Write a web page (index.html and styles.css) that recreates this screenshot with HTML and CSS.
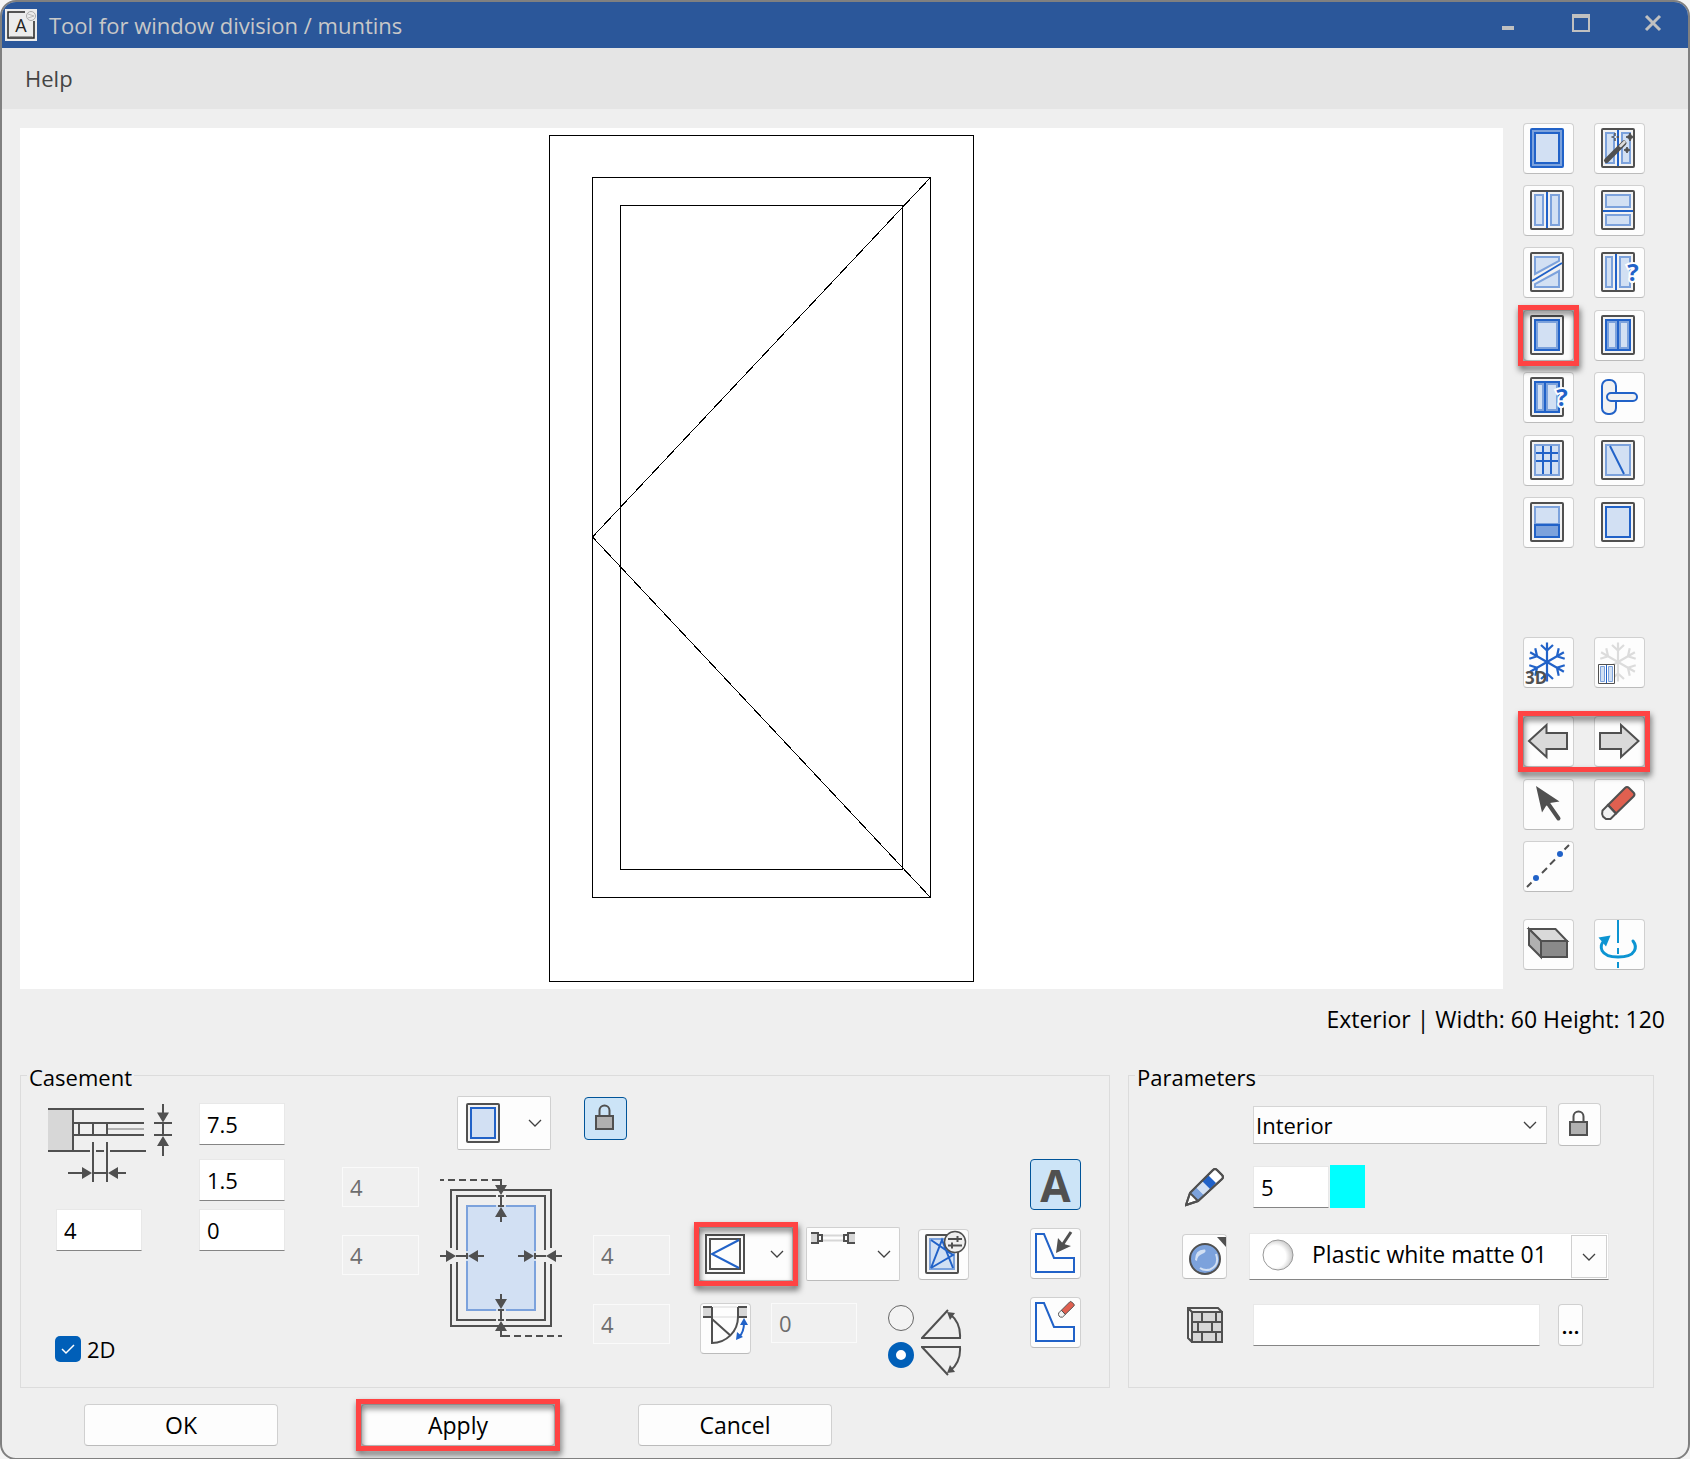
FILE: index.html
```html
<!DOCTYPE html>
<html lang="en">
<head>
<meta charset="utf-8">
<title>Tool for window division / muntins</title>
<link rel="stylesheet" href="styles.css">
</head>
<body>
<svg class="defs" aria-hidden="true">
  <symbol id="frame" viewBox="0 0 49 49"><rect class="dark pale" x="7" y="5" width="32" height="38" rx="1"/></symbol>
  <symbol id="chevron" viewBox="0 0 14 8"><path class="thin" d="M1 1l6 6 6-6"/></symbol>
  <symbol id="lock" viewBox="0 0 41 41"><path class="dark" d="M14.500 18v-5.500a5 5 0 0 1 10 0V18"/><rect class="dark mid" x="11" y="18" width="17" height="13"/></symbol>
  <symbol id="snow" viewBox="-24 -24 48 48">
    <g fill="none" stroke="currentColor" stroke-width="2.200">
      <path d="M0 0V-19.500M-6-17L0-11.500L6-17"/>
      <path transform="rotate(60)" d="M0 0V-19.500M-6-17L0-11.500L6-17"/>
      <path transform="rotate(120)" d="M0 0V-19.500M-6-17L0-11.500L6-17"/>
      <path transform="rotate(180)" d="M0 0V-19.500M-6-17L0-11.500L6-17"/>
      <path transform="rotate(240)" d="M0 0V-19.500M-6-17L0-11.500L6-17"/>
      <path transform="rotate(300)" d="M0 0V-19.500M-6-17L0-11.500L6-17"/>
    </g>
  </symbol>
  <symbol id="eraser" viewBox="0 0 49 49">
    <path class="red" d="M13 25L30 8q2-2 4 0l4.500 4.500q2 2 0 4L21 33.500Z"/>
    <path class="dark pale" d="M13 25L7.500 30.500Q6.500 34 8 36.500L11 39H15.500L21 33.500Z"/>
    <path class="dark" d="M13 25L30 8q2-2 4 0l4.500 4.500q2 2 0 4L21 33.500Z"/>
  </symbol>
  <symbol id="outline" viewBox="0 0 49 49"><path class="blue" d="M5 5H13L23 29H43V43H5Z"/></symbol>
</svg>

<div class="window">
  <header class="titlebar">
    <svg class="appicon" width="32" height="32" viewBox="0 0 32 32">
      <rect width="32" height="32" fill="#ececec"/>
      <path d="M20 3H3v26h26V12" fill="none" stroke="#222" stroke-width="1.500"/>
      <path d="M4.500 27.500h23" stroke="#999"/>
      <circle cx="26" cy="7" r="4.500" fill="none" stroke="#aaa"/><path d="M23 5l6 2M23 9l6-2" stroke="#bbb"/>
      <text x="16" y="23" text-anchor="middle" font-size="18" fill="#222">A</text>
    </svg>
    <h1 class="title">Tool for window division / muntins</h1>
    <div class="winbuttons">
      <button type="button" aria-label="Minimize"><svg width="20" height="20"><path d="M4 12h12v4H4z" fill="#c0c0c0"/></svg></button>
      <button type="button" aria-label="Maximize"><svg width="20" height="20"><path fill="#c0c0c0" fill-rule="evenodd" d="M1 0h18v18H1zM3 4v12h14V4z"/></svg></button>
      <button type="button" aria-label="Close"><svg width="20" height="20"><path d="M2 2l14 14M16 2L2 16" stroke="#c0c0c0" stroke-width="3"/></svg></button>
    </div>
  </header>
  <nav class="menubar"><button type="button">Help</button></nav>

  <main>
    <section class="work">
      <div class="canvas">
        <svg width="425" height="847" viewBox="0 0 425 847" fill="none" stroke="#000" role="img" aria-label="Window preview">
          <rect x=".5" y=".5" width="424" height="846"/>
          <rect x="43.500" y="42.500" width="338" height="720"/>
          <rect x="71.500" y="70.500" width="282" height="664"/>
          <path shape-rendering="crispEdges" d="M381.500 42.500L43.500 402L381.500 762.500"/>
        </svg>
      </div>

      <div class="toolbox">
        <div class="tools">
          <button type="button" class="tool" aria-label="Frame"><svg viewBox="0 0 49 49"><rect class="blue soft" x="7" y="5" width="32" height="38" rx="1"/><rect class="blue glass" x="11" y="9" width="24" height="30"/></svg></button>
          <button type="button" class="tool" aria-label="Wizard"><svg viewBox="0 0 49 49"><use href="#frame"/><path class="pane" d="M11 9h8v30h-8zM27 9h8v30h-8z"/><path class="blue" d="M23 6v36"/><path d="M11.500 36.500L29 19" stroke="#505050" stroke-width="5" stroke-linecap="round"/><path d="M25.500 22L29.500 18" stroke="#ddd" stroke-width="2.500" stroke-linecap="round"/><path d="M35 9l1.300 2.700L39 13l-2.700 1.300L35 17l-1.300-2.700L31 13l2.700-1.300zM32 23l1 2 2 1-2 1-1 2-1-2-2-1 2-1z" fill="#505050" stroke="#505050"/><path d="M20 9v3M20 14v3M16.500 13h2.500M21.500 13h2.500" stroke="#505050" stroke-width="1.500"/></svg></button>
          <button type="button" class="tool" aria-label="Vertical division"><svg viewBox="0 0 49 49"><use href="#frame"/><path class="pane" d="M11 9h8v30h-8zM27 9h8v30h-8z"/><path class="blue" d="M23 6v36"/></svg></button>
          <button type="button" class="tool" aria-label="Horizontal division"><svg viewBox="0 0 49 49"><use href="#frame"/><path class="pane" d="M11 9h24v12H11zM11 29h24v10H11z"/><path class="blue" d="M8 25h30"/></svg></button>
          <button type="button" class="tool" aria-label="Diagonal division"><svg viewBox="0 0 49 49"><use href="#frame"/><path class="pane" d="M11 9H35V13L11 26ZM35 23V39H11V36Z"/><path class="blue" d="M8 33L38 15"/></svg></button>
          <button type="button" class="tool" aria-label="Custom division"><svg viewBox="0 0 49 49"><use href="#frame"/><path class="pane" d="M11 9h6v30h-6zM25 9h10v30H25z"/><path class="blue" d="M21 6v36"/><text class="ask" x="38" y="33">?</text></svg></button>
        </div>
        <div class="tools">
          <div class="marked"><button type="button" class="tool" aria-label="Casement"><svg viewBox="0 0 49 49"><use href="#frame"/><rect class="blue soft" x="11" y="9" width="24" height="30"/><path class="fillglass" d="M14 12h18v24H14z"/></svg></button></div>
          <button type="button" class="tool" aria-label="Double casement"><svg viewBox="0 0 49 49"><use href="#frame"/><path class="blue soft" d="M11 9h24v30H11zM23 9v30"/><path class="fillglass" d="M14 12h6v24h-6zM26 12h6v24h-6z"/></svg></button>
          <button type="button" class="tool" aria-label="Custom casement"><svg viewBox="0 0 49 49"><use href="#frame"/><path class="blue soft" d="M11 9h24v30H11zM21 9v30"/><path class="fillglass" d="M14 12h4v24h-4zM24 12h8v24h-8z"/><text class="ask" x="38" y="33">?</text></svg></button>
          <button type="button" class="tool" aria-label="Handle"><svg viewBox="0 0 49 49"><rect class="blue pale" x="7" y="7" width="14" height="34" rx="6"/><rect class="blue pale" x="12" y="20" width="30" height="8" rx="4"/></svg></button>
        </div>
        <div class="tools">
          <button type="button" class="tool" aria-label="Muntins"><svg viewBox="0 0 49 49"><use href="#frame"/><path class="pane" d="M11 9h24v30H11z"/><path class="blue" d="M19 10v28M27 10v28M12 17h22M12 25h22"/></svg></button>
          <button type="button" class="tool" aria-label="Free muntin"><svg viewBox="0 0 49 49"><use href="#frame"/><path class="pane" d="M11 9h24v30H11z"/><path class="blue" d="M15 10l14 28"/></svg></button>
          <button type="button" class="tool" aria-label="Panel"><svg viewBox="0 0 49 49"><use href="#frame"/><path class="pane" d="M11 9h24v17H11z"/><path class="blue soft" d="M11 27h24v12H11z"/></svg></button>
          <button type="button" class="tool" aria-label="Glazing"><svg viewBox="0 0 49 49"><use href="#frame"/><path class="blue glass" d="M11 9h24v30H11z"/></svg></button>
        </div>
        <div class="tools tools-freeze">
          <button type="button" class="tool freeze" aria-label="Freeze 3D"><svg viewBox="0 0 49 49"><use href="#snow" x="-1" y="0" width="48" height="48"/><text x="1" y="46" font-size="17" font-weight="700" fill="#505050">3D</text></svg></button>
          <button type="button" class="tool freeze-off" aria-label="Freeze division"><svg viewBox="0 0 49 49"><use href="#snow" x="-1" y="0" width="48" height="48"/><path d="M3.500 26.500h16v19h-16z" fill="#fff" stroke="#505050"/><path d="M5.500 28.500h4v15h-4zM13.500 28.500h4v15h-4z" fill="#d2e0f3" stroke="#7ca2dc"/><path d="M11.500 27v18" stroke="#2162c8"/></svg></button>
        </div>
        <div class="tools tools-history marked">
          <button type="button" class="tool" aria-label="Undo"><svg viewBox="0 0 49 49"><path class="dark grey" d="M5 24L22.500 8V16H43V32H22.500V40Z"/></svg></button>
          <button type="button" class="tool" aria-label="Redo"><svg viewBox="0 0 49 49"><path class="dark grey" d="M43.500 24L26 8V16H5V32H26V40Z"/></svg></button>
        </div>
        <div class="tools tools-edit">
          <button type="button" class="tool" aria-label="Select"><svg viewBox="0 0 49 49"><path d="M12 6L35.500 21.500L26 23L22 26L18 32.500Z" fill="#505050"/><path d="M23 22L34.500 38.500" stroke="#505050" stroke-width="4" stroke-linecap="round"/></svg></button>
          <button type="button" class="tool" aria-label="Delete"><svg viewBox="0 0 49 49"><use href="#eraser"/></svg></button>
          <button type="button" class="tool" aria-label="Reference line"><svg viewBox="0 0 49 49"><path class="dark" d="M3 45l4.500-4.500M18 31l5-5M26 22.500l5-5M40.500 7.500L45 3"/><circle cx="12" cy="36" r="3" fill="#2162c8"/><circle cx="36" cy="12" r="3" fill="#2162c8"/></svg></button>
        </div>
        <div class="tools tools-view">
          <button type="button" class="tool" aria-label="3D view"><svg viewBox="0 0 49 49"><path class="dark grey" d="M5 9H31.500L43 21H17Z"/><path class="dark mid" d="M5 9L17 21V37L5 25Z"/><path class="dark shade" d="M17 21H43V37H17Z"/></svg></button>
          <button type="button" class="tool" aria-label="Flip view"><svg viewBox="0 0 49 49"><g fill="none" stroke="#0c94d2"><path stroke-width="2" d="M23 0v23M23 28v6M23 42v6"/><path stroke-width="3" stroke-linecap="round" d="M8 22C5 25 3.500 37 23 37S42 26 38 21"/></g><path d="M3.500 17.500L15.500 15.500L11 26.500Z" fill="#0c94d2"/></svg></button>
        </div>
      </div>
    </section>

    <p class="status">Exterior | Width: 60 Height: 120</p>

    <form class="settings">
      <div class="panels">
        <fieldset class="panel">
          <legend>Casement</legend>
          <div class="casement">
            <div class="col section">
              <svg width="125" height="80" viewBox="0 0 125 80">
                <path d="M0 5h25v44H0z" fill="#d7d7d7"/><path d="M60 26h36" stroke="#b0b0b0" stroke-width="2"/>
                <path class="dark" d="M0 6h96M0 48h42M48 48h8M62 48h36M25 6v42M25 20h71M25 32h71M31 20v12M45 20v12M59 20v12M45 39v40M59 39v40M20 70h16M45 70h14M68 70h10M115 1v10M115 20v12M115 40v13M106 20h18M106 32h18"/>
                <path class="tip" d="M34 64l10 6-10 6zM70 64l-10 6 10 6zM109 9.500h12l-6 10zM109 43h12l-6-10z"/>
              </svg>
              <input class="field" aria-label="Glass offset" value="4">
              <label class="check"><input type="checkbox" checked>2D</label>
            </div>
            <div class="col depths">
              <input class="field" aria-label="Profile depth" value="7.5">
              <input class="field" aria-label="Glass thickness" value="1.5">
              <input class="field" aria-label="Depth offset" value="0">
            </div>
            <div class="col left-widths">
              <input class="field small" aria-label="Top width" value="4" disabled>
              <input class="field small" aria-label="Left width" value="4" disabled>
            </div>
            <div class="col profile">
              <button type="button" class="drop" aria-haspopup="listbox" aria-label="Profile type">
                <svg width="34" height="40" viewBox="6 4 34 40"><use href="#frame" width="49" height="49"/><path class="blue glass" d="M11 9h24v30H11z"/></svg>
                <svg width="14" height="8"><use href="#chevron"/></svg>
              </button>
              <svg width="122" height="160" viewBox="0 0 122 160">
                <path class="dark" d="M11 70V12H111V70M111 86V148H11V86M17 72V18H56M66 18H105V72M105 84V142H66M56 142H17V84"/>
                <path class="fillglass" d="M26 27h70v106H26z"/>
                <path class="soften" d="M27 73V28H56M66 28H95V73M95 83V132H66M56 132H27V83"/>
                <path class="dark" d="M0 2h4M8 2h7M19 2h7M30 2h7M41 2h7M52 2h9V8M61 18v10M58 18h6M58 28h6M61 38v6M0 78h8M16 78h11M27 75v6M36 78h8M122 78h-8M106 78H95M95 75v6M86 78h-8M61 152v6h9M74 158h7M85 158h7M96 158h7M107 158h7M118 158h4M61 142v-10M58 142h6M58 132h6M61 122v-6"/>
                <path class="tip" d="M55 7h12l-6 10zM55 39h12l-6-10zM6 72v12l10-6zM38 72v12l-10-6zM116 72v12l-10-6zM84 72v12l10-6zM55 153h12l-6-10zM55 121h12l-6 10z"/>
              </svg>
            </div>
            <div class="col right-widths">
              <button type="button" class="lock on" aria-label="Lock widths" aria-pressed="true"><svg width="41" height="41"><use href="#lock"/></svg></button>
              <input class="field small" aria-label="Right width" value="4" disabled>
              <input class="field small" aria-label="Bottom width" value="4" disabled>
            </div>
            <div class="col opening">
              <div class="line">
                <div class="marked"><button type="button" class="drop wide-icon" aria-haspopup="listbox" aria-label="Opening type">
                  <svg width="40" height="40" viewBox="0 0 40 40"><rect class="dark" x="1" y="1" width="38" height="38"/><rect class="dark" x="5" y="5" width="30" height="30"/><path class="blue" d="M34 6L7 20L34 34"/></svg>
                  <svg width="14" height="8"><use href="#chevron"/></svg>
                </button></div>
                <button type="button" class="drop hinge" aria-haspopup="listbox" aria-label="Hinge position">
                  <svg class="high" width="44" height="12" viewBox="0 0 44 12"><path d="M0 1h7v10H0zM37 1h7v10h-7z" fill="#d7d7d7"/><path d="M12 3.500h20M12 8.500h20" stroke="#d7d7d7" stroke-width="2"/><path class="dark" d="M0 1H7V11H0M7 3h4v6H7M44 1H37V11H44M37 3h-4v6h4"/></svg>
                  <svg width="14" height="8"><use href="#chevron"/></svg>
                </button>
                <button type="button" class="tool options" aria-label="Opening options"><svg viewBox="0 0 49 49"><use href="#frame"/><path class="pane" d="M11 9h24v30H11z"/><path class="blue" d="M12 38L23 10L34 38M12 10L34 25L12 38"/><circle cx="36" cy="12" r="10.500" fill="#efefef" stroke="#505050" stroke-width="1.500"/><path class="dark" d="M29 9h14M29 15.500h14M38.500 6v6M33 12.500v6"/></svg></button>
              </div>
              <div class="line swing">
                <button type="button" class="tool" aria-label="Opening angle"><svg viewBox="0 0 49 49"><path d="M2 3h9v10H2zM37 3h9v10h-9z" fill="#d7d7d7"/><path d="M12 3h24M12 13h24" stroke="#d7d7d7"/><path class="dark" d="M2 3H11M2 13H11M46 3H37M46 13H37M37 3V13A26 26 0 0 1 11 39V3M11 15L30 32"/><path class="blue" d="M43 19Q43 28 38 33"/><path d="M43 14l4 7h-8zM35 36l1-8 6 5z" fill="#2162c8"/></svg></button>
                <input class="field" aria-label="Angle" value="0" disabled>
                <div class="radios">
                  <label><input type="radio" name="swing" aria-label="Open upwards"><svg width="41" height="30" viewBox="0 0 41 30"><path class="dark" d="M27 1L1 29H39Q40 14 29 5"/><path class="tip" d="M26 3l8 1-5 7z"/></svg></label>
                  <label><input type="radio" name="swing" aria-label="Open downwards" checked><svg width="41" height="30" viewBox="0 0 41 30"><path class="dark" d="M27 29L1 1H39Q40 16 29 25"/><path class="tip" d="M26 27l8-1-5-7z"/></svg></label>
                </div>
              </div>
            </div>
            <div class="col shapes">
              <button type="button" class="tool on letter" aria-pressed="true">A</button>
              <button type="button" class="tool" aria-label="Pick outline"><svg viewBox="0 0 49 49"><use href="#outline"/><path d="M40 3L32 15" stroke="#505050" stroke-width="3"/><path d="M25 24L27 9L31 13.500L34.500 15.500L40 17Z" fill="#505050"/></svg></button>
              <button type="button" class="tool" aria-label="Delete outline"><svg viewBox="0 0 49 49"><use href="#outline"/><use href="#eraser" x="24" y="0" width="24" height="24"/></svg></button>
            </div>
          </div>
        </fieldset>

        <fieldset class="panel">
          <legend>Parameters</legend>
          <div class="params">
            <div class="param first">
              <span class="select"><select aria-label="Side"><option>Interior</option><option>Exterior</option></select><svg width="14" height="8"><use href="#chevron"/></svg></span>
              <button type="button" class="lock" aria-label="Lock parameters"><svg width="41" height="41"><use href="#lock"/></svg></button>
            </div>
            <div class="param pen">
              <span class="icon"><svg width="40" height="40" viewBox="0 0 40 40"><path class="dark white" d="M5 26L28 3q2-2 4 0l5 5q2 2 0 4L13 34L1 38Z"/><path d="M5 26L11 20L19 28L13 34Z" fill="#7ca2dc"/><path d="M11 20L17 14L25 22L19 28Z" fill="#d2e0f3"/><path d="M17 14L23 8L31 16L25 22Z" fill="#2162c8"/><path class="dark" d="M5 26L28 3q2-2 4 0l5 5q2 2 0 4L13 34L1 38ZM5 26L13 34"/></svg></span>
              <input class="field" aria-label="Pen" value="5">
              <button type="button" class="pencolor" aria-label="Pen colour"></button>
            </div>
            <div class="param surface">
              <button type="button" class="sphere" aria-label="Surface"><svg width="43" height="43" viewBox="0 0 43 43"><circle class="dark soft" cx="22" cy="24" r="15"/><path d="M12 25Q12 14 22 14.500Q24 17 19 19T14 26Z" fill="#d2e0f3"/><path d="M33 19Q37 30 27 34.500Q21 36 17 33" fill="none" stroke="#d2e0f3" stroke-width="2"/><path d="M34 2h9v10z" fill="#505050"/></svg></button>
              <div class="combo">
                <svg width="32" height="32" viewBox="0 0 32 32"><defs><radialGradient id="ball" cx=".4" cy=".55" r=".6"><stop offset=".6" stop-color="#fff"/><stop offset="1" stop-color="#c8c8c8"/></radialGradient></defs><circle cx="16" cy="16" r="15" fill="url(#ball)" stroke="#999"/></svg>
                <input aria-label="Surface name" value="Plastic white matte 01">
                <button type="button" aria-label="Show surfaces"><svg width="14" height="8"><use href="#chevron"/></svg></button>
              </div>
            </div>
            <div class="param texture">
              <span class="icon"><svg width="36" height="36" viewBox="0 0 36 36"><path d="M5 5h30v30H5z" fill="#d7d7d7"/><path class="dark" d="M5 5h30v30H5zM5 5L1 1M5 35L1 31V1H31L35 5M5 15h30M5 25h30M15 5v10M29 5v10M11 15v10M25 15v10M15 25v10M29 25v10"/></svg></span>
              <input class="field" aria-label="Texture" value="">
              <button type="button" class="browse" aria-label="Browse textures">...</button>
            </div>
          </div>
        </fieldset>
      </div>
      <footer class="actions">
        <button type="button">OK</button>
        <div class="marked"><button type="button">Apply</button></div>
        <button type="button">Cancel</button>
      </footer>
    </form>
  </main>
</div>
</body>
</html>
```
FILE: styles.css
```css
* { box-sizing: border-box; }

body {
  margin: 0;
  background: #f4f4f4;
  color: #000;
  font-family: "Open Sans", "Noto Sans", sans-serif;
  font-size: 22px;
  line-height: 28px;
}

button, input, select { font: inherit; color: inherit; margin: 0; }
button { padding: 0; background: none; border: 0; }
svg { display: block; flex: none; }

.defs { position: absolute; width: 0; height: 0; }

/* icon paint */
.dark { fill: none; stroke: #505050; stroke-width: 2; }
.blue { fill: none; stroke: #2162c8; stroke-width: 2; }
.thin { fill: none; stroke: #404040; stroke-width: 1.3; }
.pane { fill: #d2e0f3; stroke: #7ca2dc; stroke-width: 2; }
.soften { fill: none; stroke: #7ca2dc; stroke-width: 2; }
.pale { fill: #f2f2f2; }
.white { fill: #fff; }
.grey { fill: #d9d9d9; }
.mid { fill: #b0b0b0; }
.shade { fill: #8a8a8a; }
.soft { fill: #7ca2dc; }
.glass, .fillglass { fill: #d2e0f3; }
.red { fill: #e06050; }
.tip { fill: #505050; }
.ask {
  font-size: 24px;
  font-weight: 700;
  text-anchor: middle;
  fill: #2162c8;
  stroke: #fdfdfd;
  stroke-width: 4;
  paint-order: stroke;
}

.window {
  min-height: 100vh;
  border: 2px solid #808080;
  border-radius: 16px;
  overflow: hidden;
  background: #efefef;
}

.titlebar {
  display: flex;
  align-items: center;
  height: 46px;
  padding: 0 24px 0 3px;
  background: #2b579a;
  color: #c8c8c8;
}
.title { flex: 1; margin: 0 0 0 12px; font-size: 22px; font-weight: 400; }
.winbuttons { display: flex; gap: 53px; padding-bottom: 2px; }

.menubar {
  display: flex;
  align-items: center;
  height: 61px;
  padding: 0 0 2px 23px;
  background: #e5e5e5;
  color: #444;
}

.work { display: flex; gap: 20px; padding: 14px 43px 0 18px; }
.canvas {
  flex: 1;
  display: flex;
  justify-content: center;
  margin-top: 5px;
  padding: 7px 0;
  background: #fff;
}
.toolbox { display: flex; flex-direction: column; gap: 12px; }
.tools { display: grid; grid-template-columns: 51px 51px; gap: 11px 20px; }
.tools-freeze { margin-top: 77px; }
.tools-history { margin-top: 16px; }
.tools-view { margin-top: 15px; }

.tool, .lock, .drop, .sphere, .browse, .actions button {
  background: #fdfdfd;
  border: 1px solid #d0d0d0;
  border-bottom-color: #bbb;
  border-radius: 4px;
}
.tool { width: 51px; height: 51px; }
.tool svg { width: 49px; height: 49px; overflow: visible; }
.tool.on, .lock.on { background: #cce4f7; border-color: #005499; }
.freeze { color: #2162c8; }
.freeze-off { color: #dcdcdc; }
.letter { font-size: 44px; font-weight: 700; line-height: 44px; color: #505050; }

/* red call-out frame laid over the controls */
.marked { position: relative; }
.marked > button { display: block; }
.marked > .drop { display: flex; }
.marked::after {
  content: "";
  position: absolute;
  inset: -5px;
  border: 5px solid #ff4343;
  filter: drop-shadow(1px 4px 3px rgba(0, 0, 0, 0.6));
  pointer-events: none;
}

.status { margin: 16px 23px 0 0; font-size: 23px; text-align: right; }

.panels {
  display: grid;
  grid-template-columns: 1090fr 526fr;
  gap: 18px;
  padding: 26px 34px 0 18px;
}
.panel { min-width: 0; margin: 0; padding: 0; border: 1px solid #dcdcdc; }
.panel legend { margin-left: 6px; padding: 4px 2px 0 2px; }

.field {
  width: 86px;
  height: 42px;
  padding: 0 7px;
  background: #fff;
  border: 1px solid #e8e8e8;
  border-bottom-color: #858585;
}
.field:disabled {
  height: 40px;
  background: #f0f0f0;
  border-color: #fafafa;
  color: #6d6d6d;
}
.field.small { width: 77px; }

.casement { display: flex; align-items: flex-start; height: 296px; padding: 0 28px 0 27px; }
.col { display: flex; flex-direction: column; align-items: flex-start; }
.section { padding-top: 12px; }
.section .field { margin: 26px 0 85px 8px; }
.check { display: flex; align-items: center; gap: 6px; height: 26px; margin-left: 7px; }
.check input {
  appearance: none;
  width: 26px;
  height: 26px;
  border-radius: 5px;
  background: #005fb8 url('data:image/svg+xml,<svg xmlns="http://www.w3.org/2000/svg" viewBox="0 0 26 26"><path d="M7 13l4 4 8-8" fill="none" stroke="white" stroke-width="1.500"/></svg>');
}
.depths { gap: 8px; padding-top: 12px; margin-left: 26px; }
.depths .field:first-child { margin-bottom: 6px; }
.left-widths { gap: 28px; padding-top: 76px; margin-left: 57px; }
.profile { gap: 28px; padding-top: 5px; margin-left: 21px; }
.drop {
  display: flex;
  align-items: center;
  justify-content: space-between;
  width: 94px;
  height: 54px;
  padding: 0 8px;
  border-radius: 2px;
}
.profile .drop { margin-left: 17px; }
.drop.wide-icon { padding-left: 5px; }
.drop.hinge { padding-left: 4px; }
.high { align-self: flex-start; margin-top: 4px; }
.lock { width: 43px; height: 43px; }
.right-widths { padding-top: 6px; margin-left: 22px; }
.right-widths .field { margin: 29px 0 0 9px; }
.right-widths .lock + .field { margin-top: 95px; }
.opening { gap: 22px; padding-top: 136px; margin-left: 29px; }
.line { display: flex; align-items: center; gap: 13px; }
.options { margin-left: 5px; }
.swing { align-items: flex-start; gap: 20px; padding-left: 1px; }
.radios { display: grid; gap: 3px; margin-left: 11px; padding-top: 2px; }
.radios label { display: flex; gap: 7px; }
.radios svg { margin-top: 4px; }
.radios input {
  appearance: none;
  width: 26px;
  height: 26px;
  border: 1px solid #666;
  border-radius: 50%;
  background: #f3f3f3;
}
.radios input:checked { border: 8px solid #005fb8; background: #fff; }
.shapes { gap: 18px; padding-top: 68px; margin-left: auto; }

.params { display: grid; justify-content: start; align-content: start; padding: 12px 0 0 53px; }
.param { display: flex; align-items: center; }
.first { gap: 11px; padding-left: 71px; }
.select { display: flex; align-items: center; width: 294px; height: 38px; background: #fdfdfd; border: 1px solid #d5d5d5; border-bottom-color: #bbb; }
.select select { flex: 1; height: 36px; padding: 0 2px; background: none; border: 0; appearance: none; }
.select svg { margin-right: 9px; }
.icon { display: flex; justify-content: center; width: 45px; margin-right: 26px; }
.pen { margin-top: 19px; }
.pen .field { width: 76px; }
.pencolor { width: 35px; height: 43px; margin-left: 1px; background: #00ffff; }
.surface { margin-top: 25px; gap: 22px; }
.sphere { width: 45px; height: 45px; }
.combo {
  display: flex;
  align-items: center;
  width: 360px;
  height: 47px;
  padding: 0 1px 0 12px;
  background: #fff;
  border: 1px solid #e8e8e8;
  border-bottom-color: #858585;
}
.combo > svg { margin-bottom: 4px; }
.combo input { flex: 1; min-width: 0; padding: 0 0 5px 18px; background: none; border: 0; font-size: 23px; }
.combo button {
  display: grid;
  place-items: center;
  width: 36px;
  height: 43px;
  background: #fdfdfd;
  border: 1px solid #d0d0d0;
}
.texture { margin-top: 24px; }
.texture .field { width: 287px; }
.browse { width: 25px; height: 42px; margin-left: 18px; font-weight: 600; }

.actions { display: flex; gap: 83px; padding: 16px 0 12px 82px; }
.actions button { width: 194px; height: 42px; font-size: 23px; }
```
